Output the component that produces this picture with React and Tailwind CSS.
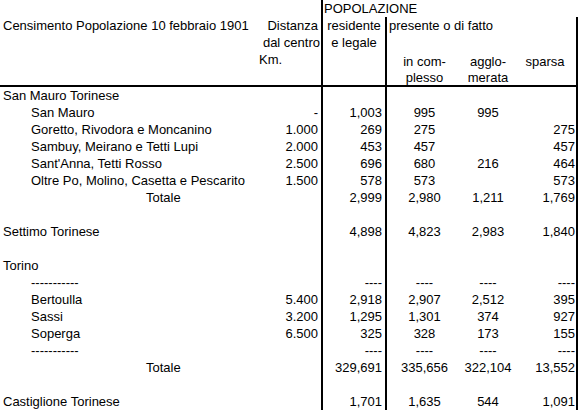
import React from "react";

const rows = [
  { a: "San Mauro Torinese" },
  { a: "San Mauro", ind: true, b: "-", c: "1,003", d: "995", e: "995" },
  { a: "Goretto, Rivodora e Moncanino", ind: true, b: "1.000", c: "269", d: "275", f: "275" },
  { a: "Sambuy, Meirano e Tetti Lupi", ind: true, b: "2.000", c: "453", d: "457", f: "457" },
  { a: "Sant'Anna, Tetti Rosso", ind: true, b: "2.500", c: "696", d: "680", e: "216", f: "464" },
  { a: "Oltre Po, Molino, Casetta e Pescarito", ind: true, b: "1.500", c: "578", d: "573", f: "573" },
  { a: "Totale", tot: true, c: "2,999", d: "2,980", e: "1,211", f: "1,769" },
  {},
  { a: "Settimo Torinese", c: "4,898", d: "4,823", e: "2,983", f: "1,840" },
  {},
  { a: "Torino" },
  { a: "-----------", ind: true, c: "----", d: "----", e: "----", f: "----" },
  { a: "Bertoulla", ind: true, b: "5.400", c: "2,918", d: "2,907", e: "2,512", f: "395" },
  { a: "Sassi", ind: true, b: "3.200", c: "1,295", d: "1,301", e: "374", f: "927" },
  { a: "Soperga", ind: true, b: "6.500", c: "325", d: "328", e: "173", f: "155" },
  { a: "-----------", ind: true, c: "----", d: "----", e: "----", f: "----" },
  { a: "Totale", tot: true, c: "329,691", d: "335,656", e: "322,104", f: "13,552" },
  {},
  { a: "Castiglione Torinese", c: "1,701", d: "1,635", e: "544", f: "1,091" },
];

const grid = "grid grid-cols-[256px_67px_64px_75px_52px_64px] h-[17px]";

export default function App() {
  return (
    <div className="w-[580px] h-[411px] overflow-hidden bg-white text-black font-['Liberation_Sans',Arial,sans-serif] text-[13px] leading-[17px]">
      {/* header row 1 */}
      <div className={grid}>
        <div />
        <div className="border-r-2 border-black" />
        <div className="col-span-4 pl-[1px] whitespace-nowrap">POPOLAZIONE</div>
      </div>
      {/* header row 2 */}
      <div className={grid}>
        <div className="pl-[3px] whitespace-nowrap">Censimento Popolazione 10 febbraio 1901</div>
        <div className="border-r-2 border-black text-right pr-[3px] whitespace-nowrap">Distanza</div>
        <div className="border-r-2 border-black text-center whitespace-nowrap">residente</div>
        <div className="pl-[2px] whitespace-nowrap">presente o di fatto</div>
        <div />
        <div className="border-r-2 border-black" />
      </div>
      {/* header row 3 */}
      <div className={grid}>
        <div />
        <div className="border-r-2 border-black flex justify-end pr-[1px] whitespace-nowrap">dal centro</div>
        <div className="border-r-2 border-black text-center whitespace-nowrap">e legale</div>
        <div />
        <div />
        <div className="border-r-2 border-black" />
      </div>
      {/* header row 4 */}
      <div className={grid}>
        <div />
        <div className="border-r-2 border-black pl-[3px] whitespace-nowrap">Km.</div>
        <div className="border-r-2 border-black" />
        <div className="text-center pt-[2px] whitespace-nowrap">in com-</div>
        <div className="text-center pt-[2px] whitespace-nowrap">agglo-</div>
        <div className="border-r-2 border-black text-center pt-[2px] whitespace-nowrap">sparsa</div>
      </div>
      {/* header row 5 */}
      <div className={grid}>
        <div />
        <div className="border-r-2 border-black" />
        <div className="border-r-2 border-black" />
        <div className="text-center pt-[1px] whitespace-nowrap">plesso</div>
        <div className="text-center pt-[1px] whitespace-nowrap">merata</div>
        <div className="border-r-2 border-black" />
      </div>
      <div className="h-[2px] w-[578px] bg-black" />
      {rows.map((r, i) => (
        <div key={i} className={grid}>
          <div
            className={
              "whitespace-nowrap " +
              (r.tot ? "pl-[146px]" : r.ind ? "pl-[31px]" : "pl-[3px]")
            }
          >
            {r.a || ""}
          </div>
          <div className="border-r-2 border-black text-right pr-[3px] whitespace-nowrap">{r.b || ""}</div>
          <div className="border-r-2 border-black text-right pr-[3px] whitespace-nowrap">{r.c || ""}</div>
          <div className="text-center whitespace-nowrap">{r.d || ""}</div>
          <div className="text-center whitespace-nowrap">{r.e || ""}</div>
          <div className="border-r-2 border-black text-right pr-[1px] whitespace-nowrap">{r.f || ""}</div>
        </div>
      ))}
    </div>
  );
}
